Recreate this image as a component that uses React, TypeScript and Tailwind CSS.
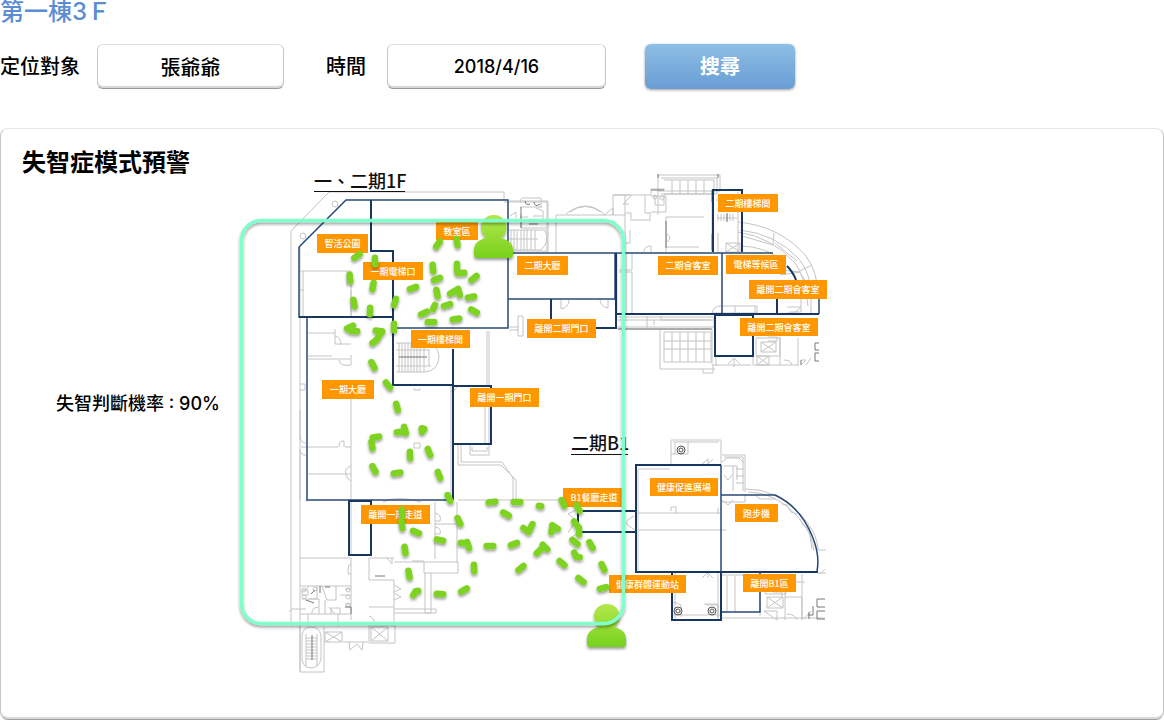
import { useState } from 'react';

type Box = [x: number, y: number, w: number, h: number, text: string];
type Step = [x: number, y: number, angle: number, length?: number];

const zones: Box[] = [
  [317, 234, 51, 19, '智活公園'],
  [363, 262, 60, 18, '一期電梯口'],
  [436, 222, 42, 18, '教室區'],
  [411, 330, 59, 18, '一期樓梯間'],
  [517, 256, 51, 19, '二期大廳'],
  [527, 319, 69, 19, '離開二期門口'],
  [718, 194, 60, 18, '二期樓梯間'],
  [658, 256, 60, 19, '二期會客室'],
  [726, 255, 60, 19, '電梯等候區'],
  [749, 280, 78, 19, '離開二期會客室'],
  [740, 318, 78, 18, '離開二期會客室'],
  [322, 380, 52, 19, '一期大廳'],
  [470, 388, 69, 19, '離開一期門口'],
  [361, 505, 69, 19, '離開一期走道'],
  [563, 488, 62, 19, 'B1餐廳走道'],
  [609, 575, 77, 18, '健康群體運動站'],
  [650, 478, 68, 18, '健康促進廣場'],
  [735, 504, 43, 18, '跑步機'],
  [743, 574, 53, 18, '離開B1區'],
];

const steps: Step[] = [
  [438, 244, -55], [457, 242, 80], [357, 256, -35], [375, 261, 88], [433, 268, 85],
  [437, 279, -20], [457, 267, 90], [461, 273, -5], [474, 278, -40], [350, 278, 85],
  [373, 286, -80], [413, 288, -20], [437, 293, 80], [453, 292, -30], [459, 292, 75],
  [471, 297, -12], [395, 302, -72], [354, 303, 80], [447, 305, -18], [474, 311, 28],
  [434, 307, -65, 11], [424, 313, -25], [431, 322, 0], [456, 319, -8], [370, 311, -88],
  [394, 327, 90], [350, 327, -25], [354, 331, 5], [379, 331, 8], [380, 334, -60], [375, 341, -40],
  [373, 365, 62], [388, 385, 50], [397, 407, 75], [399, 432, -8, 11], [405, 430, 75],
  [422, 430, 90, 10], [423, 429, 0, 9], [376, 437, -10], [372, 445, 82], [410, 455, 88],
  [429, 452, 68], [374, 469, 62], [397, 473, -8], [439, 475, 68], [449, 498, 65],
  [402, 513, 85], [402, 525, 82], [416, 532, 22], [405, 550, 82], [440, 540, 12],
  [459, 521, 65], [409, 574, 80], [417, 591, -10, 9], [414, 594, -55, 9], [440, 594, 3],
  [464, 590, -30], [492, 502, -7], [517, 502, 2], [540, 506, 12, 9], [563, 503, 65],
  [578, 508, 60], [506, 514, 30], [526, 530, 38], [531, 527, -65], [552, 529, -80],
  [555, 527, 32], [576, 524, 55], [579, 531, 90], [575, 542, 40], [591, 545, 60],
  [464, 543, 5], [468, 545, 70], [490, 546, 2], [514, 544, -20], [539, 551, -45],
  [545, 547, 45], [562, 563, 42], [521, 568, -40], [575, 554, 60, 10], [578, 557, 5, 10],
  [474, 568, 88], [603, 567, 65], [581, 580, 38], [603, 588, -15],
];

const greyLines = [
  // outer boundary of the west wing
  'M291 626V231L329 192H504V200', 'M291 611h-2M291 609h15',
  'M504 202h43v50M300 247v70M300 318v184',
  // rooms of the west wing
  'M300 271h51v46M347 271v15M303 271v47M300 290h4M351 290v27M335 329v15h16M308 333h27M308 356h24M308 359h42M339 360q1 7 12 5V355M301 447h37M345 447h6M339 447q0-7 5-6v6M308 474h43M351 390v110M300 384h5v6h-5M300 410v30M300 452v48',
  'M351 466q-7 2-5 9q2 5 5 6M300 436q1 8 6 7M300 449q1 7 6 6M335 336q6 1 6 9M414 388v2h6v-2M414 443h6v5h-6z',
  // south block
  'M300 502v170M300 558h51v62M300 586h51M306 502v-2M351 502v54M351 574h-3q0-12 3-9M369 558v22h25v47M369 607h25M369 558h25M394 562h64v11h-34v-11M425 573v40h6v-40M394 609h42v4h-42M435 502v57M435 524h22M457 502v61M435 513q7 2 5 8h-5M435 527q7 1 5 7h-5M412 561h12M383 502q14-7 38 0M387 558l5 6v-6M394 585l7 4l-7 3M394 593l7 4l-7 3',
  'M300 614h51M308 614v12M338 614v12M302 590h6v5h-6zM317 586v13h-8M322 586l5 14h9v-14M302 599h17v15M325 600v14M340 595h11M340 614v-6h-9v6M345 589h6M345 604h6M309 586l-4 5M329 607l6 7M312 614q-1-6 6-7M369 616q5 1 6 9',
  'M300 627v45h24v-45M302 635q1-8 9-8t10 8v24q-2 9-10 9t-9-9zM306 634v32M317 634v32M306 638h11M306 641h11M306 644h11M306 647h11M306 650h11M306 653h11M306 656h11M306 659h11M325 632h17v10h-17zM325 632l17 10M342 632l-17 10M369 625h26v18h-26zM371 627h17v14h-17zM371 627l17 14M388 627l-17 14M343 642h25M349 642l1 8l7-6l5 6l1-8',
  // stairs beside the corridor
  'M396 343h28q15 1 15 14q-1 14-14 15h-29M396 350h34M396 366h35M399 343v29M402 343v29M405 343v29M408 343v29M411 343v29M414 343v29M417 343v29M420 343v29M424 343v29M429 350v16M487 331v54M489 331v54M485 388v56M489 388v56',
  // terrace
  'M458 445v20h43l15 15v22M461 445v17h41l11 16v24M458 500h120M470 445v10h19v-10M472 447v4h15v-4M451 385v115M450 392q6-2 7-5',
  // stairs of the centre
  'M509 201h39v50h-39M520 202q0-5 6-4h15v10M520 207h22M521 214v14h25M527 229v22M509 230h36q5 12-4 20h-32M511 230v20M514 230v20M517 230v20M521 230v20M524 230v20M531 230v20M535 230v20M509 239h29M520 217h8M533 216h9M536 208l7 3v9M510 216l6-4v6',
  'M556 215v37M556 215h57v-20h17M566 214q20-16 38 0M570 212q15-11 31 0M604 215l9-7v7M625 215h-12M613 195h38v-6h14',
  'M561 300v9q8-2 8-9M608 300v8q-7-1-8-8M518 316h5v20h-5zM509 327h10M509 330h10',
  // kitchen and meeting rooms of phase two
  'M625 195v57M645 195v18h6M650 213v8M632 220h18M625 213h6v8M629 204h-6l9-9M630 230v13h-6M651 252v-6q-7 0-7 6M651 196h15v16h-15M655 195v10h9v-9M666 217h38M666 217v35M667 234q6 4 0 8M667 247h32',
  'M658 175h62v16h-62zM661 178h56v16h-56M664 180h50v14h-50M672 180v14M680 180v14M688 180v14M696 180v14M704 180v14M712 190v62M658 190v25M738 192v60M716 200h22M717 218h20M718 214v7M721 214v7M724 214v7M727 214v7M730 214v7M733 214v7M726 243h14v9h-14zM726 243l14 9M740 243l-14 9M718 233v19',
  'M738 222Q780 226 806 256Q817 270 819 298M740 230Q776 234 799 259Q810 272 812 297M742 246Q762 247 776 256M738 232Q772 237 795 263Q805 276 808 306M742 236l31 9l1-12M775 243l22 18M800 271l12-6M800 272l-19 3M801 274l10 17M781 270l19 2M777 260q-2 10 4 15',
  'M801 298v14h-11M787 307h14l-7 6h-8M811 298v15M722 306h35v7h-45q1-7 9-7M735 306v7M755 306v8',
  'M617 254v61M626 254v61M632 254v16h-13M619 272h13v43M617 317h97v10h-97M617 320h97M617 329h93M647 316v12M661 316v4h50M654 320v5M712 329v35M660 330v39h55M664 332h47v30h-47zM672 332v30M680 332v30M688 332v30M696 332v30M704 332v30M664 341h47M664 349h47M703 369v4h10v-8',
  'M716 356v10M728 364l6-6v9M740 364l-6-6M712 365h39M753 337v28M756 338h24v18h-24zM761 342h15v10h-15zM761 342l15 10M776 342l-15 10M768 337h9v4h-9M757 356h12v9h-12zM757 356l12 9M769 356l-12 9M780 337v28M784 360q7 0 8 5M753 365h46M798 338v27M801 360h5l-5 5M806 365l5-7',
  // basement
  'M671 465v-25h50v25M673 442h46M671 454h17v-13M675 443v11M702 464l6-5v6M713 459l-6 6M722 455h23v37M724 457h19v34M722 462l5-4h12l5 5M724 466h13v14M733 466v25M724 475l4 5l4-5M736 469h8M736 476h8M736 483h8M722 500l6 5l5-5M722 502h23v-8M745 489q30-1 55 25q18 19 18 36h8M748 492q28 0 50 25q15 17 16 34M755 495l5 4h16M782 504l5 1l4 7l6 2M800 519l3 6l6 5l3 19',
  'M638 469h32M638 470v102M638 513h83M638 530h88M671 511v-4h5v6M718 508v6M634 516q-12 6-5 10l7 5M578 509l-10 5l8 6l-8 13M578 533l-9 6',
  'M702 578l6-6v6M713 578l-6-6M675 573v46M718 573v46M672 615h48M673 602l8 3v12M706 605h12v12M704 604h14v14M722 575h38M727 576v36M735 576v36M722 618h103M722 612h7M760 577v39M763 582h42M765 583v11h21v-11M767 597h16v11h-16zM767 597l16 11M783 597l-16 11M773 592h9v5M764 611h13v9M764 611l13 9M785 592v28M785 597h17v23M802 574v46M787 614q8 0 10 6M804 619l7-8M818 573h8M820 574l5-5',
];

const darkDetails = [
  'M651 190h13M658 174v4M718 174v4M666 221v27M712 190v12M712 234v16M727 213v9M399 357h28M312 635v25M320 586v7M306 600l8 3M375 576h10',
  'M819 343h-4v7h4M819 353h-4v8h4M801 360v5M618 329h94M825 599h-8v8h8M825 611h-8v8h8M813 606v9M809 612v7M808 615h5',
  'M521 207v21M529 224h9M525 201q1 5 5 3M534 202q1 6 6 2M345 607h6v7M330 587h-5M311 594l4-4',
];

const navyThin = [
  'M299 247L346 200H508V328H393M299 247V317H393', 'M307 318V500H453',
  'M508 253H615V299H508M615 253H773M722 253V314M819 297V314', 'M721 465V612H760V572',
  'M721 495H775Q801 507 813 538Q820 556 817 571',
];

const navyThick = [
  'M371 200V251H393V385H453', 'M299 317H393',
  'M453 349V500M453 386H491V444H453z', 'M349 501H371V555H349z', 'M616 253V328H596M551 299V320',
  'M616 314H819M713 252V190H742V252', 'M787 266Q793 272 796 280M777 298V314', 'M715 315H753V356H715z',
  'M721 465H636V572H818', 'M578 511H636M578 532H636M578 511V532', 'M672 572V620H721V572',
];

const fieldClass =
  'h-[45px] min-w-0 rounded-md border border-t-[#dddddd] border-x-[#c8c8c8] border-b-[#9a9a9a] bg-white text-center text-black shadow-[inset_0_-2px_1px_#d6d6d6] outline-none focus:border-[#6b9fd6]';

function Person({ x, y }: { x: number; y: number }) {
  return (
    <g transform={`translate(${x} ${y})`} filter="url(#soft-shadow)" fill="url(#person-fill)">
      <path d="M20 0C28 0 32.500 6 32.500 12C32.500 17 30.500 20 27 23C35 25 39 29 39 35V40Q39 43 36 43H3Q0 43 0 40V35C0 29 4 25 12 23C9 20 7 17 7 12C7 6 12 0 20 0z" />
    </g>
  );
}

function FloorMap() {
  return (
    <svg
      viewBox="236 168 600 508"
      className="mt-[39px] h-auto w-[600px] min-w-0 max-w-full"
      role="img"
      aria-label="失智症模式預警"
      fontFamily="'Noto Sans CJK TC', sans-serif"
    >
      <defs>
        <linearGradient id="person-fill" x1="0" y1="0" x2="0" y2="1">
          <stop offset="0" stopColor="#b4e84a" />
          <stop offset="1" stopColor="#77d11e" />
        </linearGradient>
        <filter id="soft-shadow" x="-20%" y="-20%" width="140%" height="150%">
          <feDropShadow dx="0" dy="2" stdDeviation="1.500" floodColor="#000" floodOpacity="0.4" />
        </filter>
      </defs>

      <g fill="none" stroke="#c4c4c4" strokeWidth="1">
        {greyLines.map((d) => <path key={d} d={d} />)}
        <circle cx="335" cy="204" r="3" />
        <circle cx="303" cy="236" r="3" />
        <circle cx="655" cy="197" r="2" />
        <circle cx="662" cy="198" r="2" />
        <circle cx="304" cy="590" r="2" />
        <circle cx="315" cy="589" r="2" />
        <circle cx="304" cy="597" r="2" />
        <circle cx="348" cy="590" r="2" />
        <circle cx="348" cy="597" r="2" />
        <circle cx="348" cy="605" r="2" />
      </g>
      <g fill="none" stroke="#777777" strokeWidth="1">
        {darkDetails.map((d) => <path key={d} d={d} />)}
        {[[681, 450], [678, 611], [712, 611]].map(([cx, cy]) => (
          <g key={`${cx}-${cy}`} stroke="#555555">
            <circle cx={cx} cy={cy} r="4" />
            <circle cx={cx} cy={cy} r="2" />
          </g>
        ))}
      </g>

      <g fill="none" stroke="#264a78" strokeWidth="1.500">
        {navyThin.map((d) => <path key={d} d={d} />)}
      </g>
      <g fill="none" stroke="#17375e" strokeWidth="2">
        {navyThick.map((d) => <path key={d} d={d} />)}
      </g>

      <g fill="#111111" fontSize="18">
        <text x="314" y="188">一、二期1F</text>
        <path d="M314 191h91v1h-91z" />
        <text x="571" y="450">二期B1</text>
        <path d="M571 454h57v1h-57z" />
      </g>

      {zones.map(([x, y, w, h, text]) => (
        <g key={`${x}-${y}`}>
          <rect x={x} y={y} width={w} height={h} fill="#ff9800" />
          <text x={x + w / 2} y={y + 13} fontSize="9" fontWeight="500" textAnchor="middle" fill="#ffffff">
            {text}
          </text>
        </g>
      ))}

      <g filter="url(#soft-shadow)" stroke="#7ed321" strokeWidth="6.500" strokeLinecap="round">
        {steps.map(([x, y, angle, length = 13]) => {
          const r = (angle * Math.PI) / 180;
          const half = (length - 6.5) / 2;
          const dx = Math.cos(r) * half;
          const dy = Math.sin(r) * half;
          return <line key={`${x}-${y}`} x1={x - dx} y1={y - dy} x2={x + dx} y2={y + dy} />;
        })}
      </g>

      <Person x={474} y={215} />
      <Person x={587} y={604} />

      <rect
        x="241.500" y="220.500" width="382" height="403" rx="20"
        fill="none" stroke="#80ffcc" strokeWidth="3.500" filter="url(#soft-shadow)"
      />
    </svg>
  );
}

export default function App() {
  const [person, setPerson] = useState('張爺爺');
  const [date, setDate] = useState('2018/4/16');

  return (
    <main className="flex min-h-screen flex-col bg-white font-['Inter','Noto_Sans_CJK_TC',sans-serif] font-medium text-black">
      <h1 className="text-2xl leading-6 text-[#5b8dd3]">第一棟3Ｆ</h1>

      <form className="mt-5 flex items-center" onSubmit={(e) => e.preventDefault()}>
        <label htmlFor="person" className="mr-[17px] shrink-0 text-xl leading-6">定位對象</label>
        <input
          id="person"
          className={`${fieldClass} w-[187px] text-xl`}
          value={person}
          onChange={(e) => setPerson(e.target.value)}
        />
        <label htmlFor="date" className="mr-[21px] ml-[42px] shrink-0 text-xl leading-6">時間</label>
        <input
          id="date"
          className={`${fieldClass} w-[219px] text-lg`}
          value={date}
          onChange={(e) => setDate(e.target.value)}
        />
        <button
          type="submit"
          className="ml-[39px] h-[45px] w-[150px] rounded-md bg-linear-to-b from-[#8dbee4] to-[#6a9dd4] text-xl font-semibold text-white shadow-[0_1px_3px_rgba(0,0,0,0.4)]"
        >
          搜尋
        </button>
      </form>

      <section className="mt-[39px] flex flex-1 items-start rounded-lg border border-t-[#e6e6e6] border-x-[#c8c8c8] border-b-[#a0a0a0] bg-white shadow-[inset_0_-2px_1px_#d6d6d6]">
        <div className="flex w-[235px] shrink-0 flex-col">
          <h2 className="mt-4 pl-[21px] text-2xl leading-9 font-semibold">失智症模式預警</h2>
          <p className="mt-[211px] pl-[55px] text-lg leading-6">失智判斷機率 : 90%</p>
        </div>
        <FloorMap />
      </section>
    </main>
  );
}
